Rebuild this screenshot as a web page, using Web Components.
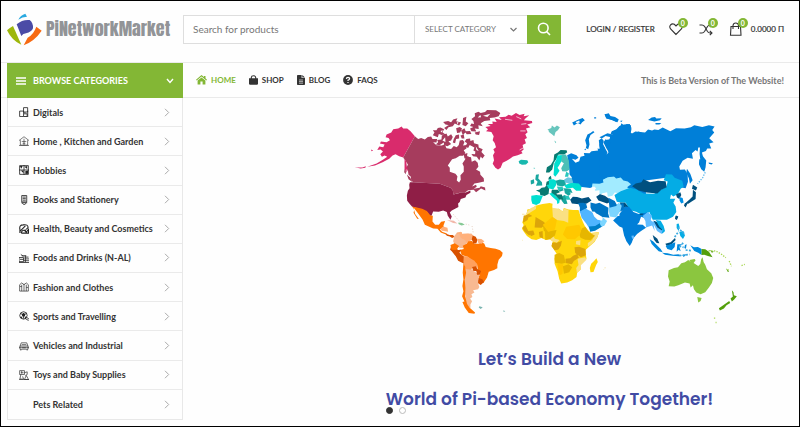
<!DOCTYPE html>
<html lang="en">
<head>
<meta charset="utf-8">
<meta name="viewport" content="width=device-width, initial-scale=1">
<title>PiNetworkMarket</title>
<style>
body{margin:0;background:#fff;font-family:Lato,"Liberation Sans",sans-serif;color:#333}
</style>
</head>
<body>
<market-page>
  <market-header slot="header"></market-header>
  <market-nav slot="nav"></market-nav>
  <category-menu slot="side">
    <category-item icon="digital">Digitals</category-item>
    <category-item icon="home">Home , Kitchen and Garden</category-item>
    <category-item icon="hobby">Hobbies</category-item>
    <category-item icon="book">Books and Stationery</category-item>
    <category-item icon="health">Health, Beauty and Cosmetics</category-item>
    <category-item icon="food">Foods and Drinks (N-AL)</category-item>
    <category-item icon="fashion">Fashion and Clothes</category-item>
    <category-item icon="sport">Sports and Travelling</category-item>
    <category-item icon="car">Vehicles and Industrial</category-item>
    <category-item icon="toy">Toys and Baby Supplies</category-item>
    <category-item>Pets Related</category-item>
  </category-menu>
  <hero-banner slot="hero">
    <world-map slot="picture"></world-map>
    <span slot="first">Let’s Build a New</span>
    <span slot="second">World of Pi-based Economy Together!</span>
  </hero-banner>
</market-page>
<script>
function define(name, html, setup){
  const t=document.createElement('template');
  t.innerHTML=html;
  customElements.define(name, class extends HTMLElement{
    constructor(){
      super();
      this.attachShadow({mode:'open'}).append(t.content.cloneNode(true));
    }
    connectedCallback(){ if(setup) setup(this,this.shadowRoot); }
  });
}

define('market-page', `
<style>
:host{display:flex;flex-direction:column;box-sizing:border-box;min-height:100vh;border:1px solid #000;background:#fefefe}
.main{flex:1;display:grid;grid-template-columns:176px 1fr;padding:0 0 6px 6px}
</style>
<slot name="header"></slot><slot name="nav"></slot>
<main class="main"><slot name="side"></slot><slot name="hero"></slot></main>`);

define('brand-logo', `
<style>
:host{display:block}
a{display:flex;align-items:center;gap:4px;text-decoration:none;color:#929497;font:400 18px Anton,Impact,"Roboto Condensed",sans-serif;line-height:32px}
svg{flex:none}
</style>
<a href="#"><svg width="35" height="33" viewBox="20 36 105 99" aria-hidden="true">
<path fill="#29a9e0" d="M54 56Q60 43 75 38L80 47Q66 47 54 56Z"/>
<path fill="#4b4ba6" d="M49 70Q66 55 88 57Q99 65 98 82Q94 93 77 97Q68 98 63 105Z"/>
<path fill="#9eb70b" d="M20 88Q28 80 38 75L63 131Q36 121 20 88Z"/>
<path fill="#f76a12" d="M70 133L82 110Q100 100 108 77L124 89Q103 120 70 133Z"/>
</svg><span>PiNetworkMarket</span></a>`);

define('product-search', `
<style>
:host{display:block}
form{display:flex;height:29px;margin:0}
input,select,button{font:inherit;border-radius:0;margin:0;box-sizing:border-box}
input{flex:1;min-width:0;border:1px solid #dedede;border-right:0;padding:0 0 0 9px;font-size:10px;color:#777;background:#fff;outline:0}
input::placeholder{color:#777;opacity:1}
.pick{position:relative;display:flex;width:113px}
select{appearance:none;width:100%;border:1px solid #dedede;border-right:0;background:#fff;color:#777;font-size:8px;padding:0 0 0 10px}
.pick svg{position:absolute;right:10px;top:11px;pointer-events:none}
button{width:34px;border:0;background:#83b735;padding:0;display:grid;place-items:center}
</style>
<form role="search"><input type="text" placeholder="Search for products" aria-label="Search for products">
<label class="pick"><select aria-label="Select category"><option>SELECT CATEGORY</option></select>
<svg width="7" height="7" viewBox="0 0 7 7" fill="none" stroke="#777" stroke-width="1.2"><path d="M.5 2L3.500 5L6.500 2"/></svg></label>
<button type="button" aria-label="Search"><svg width="14" height="14" viewBox="0 0 14 14" fill="none" stroke="#fff" stroke-width="1.600"><circle cx="6.300" cy="6" r="4.800"/><path d="M9.500 9.500L13 13"/></svg></button></form>`);

define('badge-link', `
<style>
:host{display:block}
a{position:relative;display:flex;align-items:center;color:#333;text-decoration:none}
b{position:absolute;left:9px;top:-4px;width:10px;height:10px;border-radius:50%;background:#83b735;color:#fff;font-size:7px;line-height:10px;text-align:center}
</style>
<a href="#"><slot></slot><b>0</b></a>`, (h,r)=>r.querySelector('a').setAttribute('aria-label',h.getAttribute('label')));

define('market-header', `
<style>
:host{display:flex;align-items:center;height:56px;padding:0 15px 5px 6px;border-bottom:1px solid #eaeaea}
brand-logo{width:176px}
product-search{flex:0 1 378px}
.login,.total{font-size:8px;color:#333;-webkit-text-stroke:.2px;text-decoration:none;white-space:nowrap}
.tools{margin-left:auto;display:flex;align-items:center}
.login{margin-right:14px}
badge-link{width:30px}
.total{margin-left:-8px}
svg{display:block}
</style>
<brand-logo></brand-logo><product-search></product-search>
<div class="tools"><a class="login" href="#">LOGIN / REGISTER</a>
<badge-link label="Wishlist"><svg width="14" height="14" viewBox="0 0 14 14" fill="none" stroke="#333" stroke-width="1.100"><path d="M7 12.500L1.600 7Q0 4.800 1.500 3Q3.200 1.200 5.300 2.300L7 4L8.700 2.300Q10.800 1.200 12.500 3Q14 4.800 12.400 7Z"/></svg></badge-link>
<badge-link label="Compare"><svg width="14" height="14" viewBox="0 0 14 14" fill="none" stroke="#333" stroke-width="1.100"><path d="M.5 3H3Q4.500 3 5.500 4.300L8.500 9.500Q9.500 11 11 11H13M.5 11H3Q4.500 11 5.500 9.500L8.500 4.500Q9.500 3 11 3H13M10.800 8.800L13 11L10.800 13.200M10.800 1L13 3L10.800 5"/></svg></badge-link>
<badge-link label="Cart"><svg width="14" height="14" viewBox="0 0 14 14" fill="none" stroke="#333" stroke-width="1.100"><path d="M2 4.500H11.500L12 13.300H1.500ZM4 7V3.500Q4.300 1 6.700 1Q9.200 1 9.500 3.500V7"/></svg></badge-link>
<a class="total" href="#">0.0000 Π</a></div>`);

define('market-nav', `
<style>
:host{display:flex;height:34px;padding:0 15px 0 6px;border-bottom:1px solid #eaeaea}
.browse{width:176px;box-sizing:border-box;border:0;background:#83b735;color:#fff;font:bold 9px Lato,sans-serif;display:flex;align-items:center;gap:7px;padding:0 9px;text-align:left;height:35px}
.browse span{flex:1;white-space:nowrap}
nav{display:flex;align-items:center;gap:13px;padding-left:13px}
nav a{display:flex;align-items:center;gap:4px;font-size:8px;font-weight:700;color:#333;text-decoration:none}
nav a.on{color:#83b735}
p{margin:0 0 0 auto;align-self:center;font-size:9px;font-weight:700;color:#777;white-space:nowrap}
</style>
<button class="browse" type="button"><svg width="10" height="8" viewBox="0 0 10 8" stroke="#fff" stroke-width="1.400"><path d="M0 1H10M0 4H10M0 7H10"/></svg><span>BROWSE CATEGORIES</span><svg width="8" height="6" viewBox="0 0 8 6" fill="none" stroke="#fff" stroke-width="1.400"><path d="M1 1L4 4.500L7 1"/></svg></button>
<nav>
<a class="on" href="#"><svg width="11" height="10" viewBox="0 0 11 10" fill="currentColor"><path d="M5.500 0L8 2.100V.9H9.500V3.300L11 4.700L10.300 5.400L5.500 1.500L.7 5.400L0 4.700Z"/><path d="M5.500 2.400L9.400 5.500V9.400H6.600V6.500H4.400V9.400H1.600V5.500Z"/></svg>HOME</a>
<a href="#"><svg width="9" height="10" viewBox="0 0 9 10"><path fill="currentColor" d="M0 3.200H9V8.500Q9 9.700 7.800 9.700H1.200Q0 9.700 0 8.500Z"/><path d="M2.300 4.500V2.500Q2.400.7 4.500.7Q6.600.7 6.700 2.500V4.500" fill="none" stroke="currentColor" stroke-width="1.100"/></svg>SHOP</a>
<a href="#"><svg width="8" height="10" viewBox="0 0 8 10"><path fill="currentColor" d="M.8 0H4.600V3H8V9.200Q8 10 7.200 10H.8Q0 10 0 9.200V.8Q0 0 .8 0ZM5.300 0L8 2.400H5.300Z"/><path d="M2 5H6M2 6.600H6M2 8.200H6" stroke="#fff" stroke-width=".6"/></svg>BLOG</a>
<a href="#"><svg width="10" height="10" viewBox="0 0 10 10"><circle cx="5" cy="5" r="4.900" fill="currentColor"/><path d="M3.300 3.800Q3.500 2.400 5 2.400Q6.700 2.500 6.600 3.700Q6.500 4.600 5 5.200V6.100M5 7V8.100" fill="none" stroke="#fff" stroke-width="1.200"/></svg>FAQS</a>
</nav><p>This is Beta Version of The Website!</p>`);

define('category-menu', `
<style>
:host{display:block}
nav{display:grid;grid-auto-rows:1fr;height:100%;box-sizing:border-box;border:1px solid #e8e8e8;border-top:0}
</style><nav aria-label="Categories"><slot></slot></nav>`);

const ICONS={
digital:'<path d="M.7 4.500H5V10.500H.7ZM5 .7H9.500V5.500H5ZM5.500 7.500H9V10.500H5.500M6.500 5.500V7M9.600 4V11H4"/>',
home:'<path opacity=".7" d="M0 5L5.500.8L11 5M1.500 4.500V10H9.500V4.500M0 10.500H11M3 6H8M4 8H7M5.500 3V10"/>',
hobby:'<path d="M.7.7H10.300V10.300H.7ZM5.500 0V11M0 5.500H11"/><path fill="#222" stroke="none" d="M1 1H4L2.500 4ZM6 2L9 1V4.500ZM2 6H5V9ZM7 6.500L10 6V9.500L7 10Z"/>',
book:'<path d="M3 .6H8.500V7.600H3ZM4 2.300H7.500M4 4H7.500M4 5.700H7.500M2.500 8.500H9M3.500 9L5.700 10.700L8 9"/>',
health:'<path stroke-width="1.200" d="M1 10V6Q0 1 4.500 1Q10 0 10 4L8 6M1 8L4 5L7 2M2.500 10Q3 6.500 6 7L8 9L10.500 6V10H2.500M7 8V6"/>',
food:'<path d="M0 5H5V9.500H0ZM3 3H8M2 1.500L5 4M6 4.500H10.500M6 6.500H11M5.500 8.500H11M0 10.500H11M1 7H5M7 3V10"/>',
fashion:'<path opacity=".8" d="M.7 3L3 1L5.500 3L8 1L10.300 3V10H.7ZM3 3V10M5.500 2V10M8 3V10M1 5H3M8 6H10"/>',
sport:'<path d="M5 .8Q9.200 1 9 5Q8.500 9 5 9Q.7 8.700.8 5Q1 1 5 .8ZM6.500 8L10.500 10.500M8.500 7L11 9M3.500 3.500L1.500 2.500M6.500 3.500L8.500 2.500M5 5.500V8.500"/><path fill="#222" stroke="none" d="M3 3.500L5 2L7 3.500L6.300 6H3.700ZM1 7L3 6L4 8.500ZM6 8.500L7 6L9 6.500Z"/>',
car:'<path opacity=".8" d="M1 6L2.500 2H8.500L10 6V9H1ZM1 5.500H10M3 4H8M0 7H11M2 9V10.500M9 9V10.500M3.500 7.500H7.500"/>',
toy:'<path opacity=".8" d="M.7.7H6V5H.7ZM3 1V4M6 3L9 2V5L7 6M2 5L1 10H5L4 7M6 10.500L8 6L10.500 10.500ZM0 10.500H11M2 3H5"/>'
};
define('category-item', `
<style>
:host{display:block;border-bottom:1px solid #eaeaea;min-height:28px}
:host(:last-child){border-bottom:0}
a{height:100%;display:flex;align-items:center;color:#333;text-decoration:none;font-size:9px;font-weight:700;padding:0 12px 0 11px;white-space:nowrap}
.icon{width:14px;display:flex}
.label{flex:1}
</style>
<a href="#"><span class="icon"></span><span class="label"><slot></slot></span><svg width="6" height="9" viewBox="0 0 6 9" fill="none" stroke="#aaa"><path d="M1 .8L4.700 4.500L1 8.200"/></svg></a>`,
(h,r)=>{const i=ICONS[h.getAttribute('icon')];if(i)r.querySelector('.icon').innerHTML='<svg width="10" height="10" viewBox="0 0 11 11" fill="none" stroke="#222" stroke-width=".9">'+i+'</svg>';});

define('world-map', `
<style>:host{display:block}svg{display:block;width:100%;height:auto}</style>
<svg viewBox="350 98 400 241" role="img" aria-label="World map">
<g transform="translate(350 95) scale(.3333)">
<path fill="#d92b6c" d="M195 124L160 188L148 184L137 178L128 182L118 192L98 202L75 212L52 216L80 206L100 194L112 186L104 182L96 186L91 178L99 170L92 164L82 165L88 155L100 157L104 149L90 146L93 140L110 142L120 136L116 129L107 127L110 119L124 113L130 103L145 101L155 95L160 101L172 101L182 109ZM14 217L24 218L37 218L48 214L46 219L32 221ZM64 164L70 167L64 169ZM112 185L120 181L118 188Z"/>
<path fill="#a63c5d" d="M195 124L205 132L214 129L225 134L234 126L244 125L248 132L262 132L260 143L250 142L260 151L276 152L285 148L290 160L304 162L312 153L321 157L327 150L330 137L339 135L344 141L340 152L351 150L350 161L342 166L347 174L340 183L330 183L318 190L307 193L294 212L300 219L300 231L317 237L323 244L321 257L328 263L333 255L332 241L342 231L342 215L338 206L346 194L350 184L364 188L366 201L376 196L384 204L386 216L379 224L391 231L392 240L402 250L403 260L387 264L374 266L367 275L379 270L381 276L372 282L390 279L393 274L406 278L407 287L394 281L379 292L372 285L355 286L345 294L330 294L311 299L309 286L302 279L270 267L190 262L184 257L183 246L176 240L174 226L169 220L174 209L164 193L160 188Z"/>
<path fill="#a63c5d" d="M272 98L283 103L278 112L286 118L276 120L267 117L264 127L249 121L254 113L249 106L260 106L264 99ZM280 81L295 78L305 83L299 91L287 89ZM310 74L323 70L319 79L334 83L328 92L315 86L309 94L296 97L290 105L283 99L300 88ZM276 122L290 116L294 125L304 118L309 126L304 137L296 139L304 147L293 154L283 151L282 143L269 151L258 149L265 142L262 135L275 134ZM340 69L350 65L348 80L356 85L348 94L338 90ZM319 100L330 96L337 101L331 113L322 114ZM334 107L344 100L348 109L361 108L365 117L351 118L347 113L339 120ZM365 72L376 64L375 55L386 50L393 54L406 51L412 45L439 46L452 54L447 64L434 68L420 69L422 76L404 78L393 85L399 94L386 91L387 102L375 101L380 110L365 109L361 101L371 96L361 93L365 86L373 87L371 78ZM375 113L391 109L388 120L378 119ZM318 121L328 119L328 131L319 132L316 145L309 143L312 132ZM332 122L342 119L344 131L336 131ZM350 132L361 131L362 138L371 135L373 145L386 149L387 158L399 163L395 171L405 182L398 191L393 185L389 197L381 186L370 184L365 177L376 178L377 170L371 167L374 158L360 150L355 159L347 155L352 145L345 140ZM342 178L353 174L352 184L364 188L356 195L344 190Z"/>
<path fill="#fefefe" d="M272 108L279 106L276 113ZM278 137L286 127L287 141ZM321 83L326 81L324 89ZM384 68L392 60L394 67ZM400 62L422 56L413 66ZM370 120L373 132L366 128ZM378 154L387 168L380 165Z"/>
<path fill="#8f1e46" d="M190 262L270 267L302 279L309 286L311 299L332 294L348 293L362 287L362 294L350 301L347 308L333 313L330 322L325 326L326 337L306 347L300 353L306 365L302 375L294 363L291 352L280 347L267 351L250 350L245 363L239 363L231 351L218 350L206 341L187 336L179 327L172 318L171 302L174 288L179 280L178 270L180 262Z"/>
<path fill="#d92b6c" d="M160 188L169 199L171 216L178 238L173 227L164 215L164 195ZM164 207L169 216L171 234L164 222Z"/>
<path fill="#a63c5d" d="M171 239L181 248L188 262L176 253ZM164 222L168 228L168 238L163 232Z"/>
<path fill="#d92b6c" d="M407 96L423 93L414 87L429 87L428 80L441 81L435 71L456 75L448 67L468 65L477 59L486 62L499 54L510 60L525 56L522 64L539 61L528 70L523 76L547 78L548 84L533 89L542 97L529 101L534 112L527 118L532 129L525 133L529 145L519 150L522 164L515 170L519 175L504 181L490 185L483 190L471 198L459 204L453 219L445 224L437 219L429 207L433 196L430 181L435 172L431 163L439 157L435 144L429 136L432 124L425 111L409 109L415 103Z"/>
<path fill="none" stroke="#fefefe" stroke-width="2" d="M466 73L488 76M500 65L515 72M515 88L530 86M512 108L528 108M510 165L525 157"/>
</g>
<g transform="translate(350 200) scale(.3333)">
<path fill="#ff7500" d="M187 20L201 23L217 27L231 34L242 47L249 48L248 65L256 75L267 75L274 66L286 64L281 77L282 84L270 89L277 96L291 101L290 105L273 98L263 87L250 86L225 75L218 59L206 43L198 32L191 23L196 43L207 58L202 57L191 39L193 31Z"/>
<path fill="#ffb07b" d="M272 87L280 80L293 84L295 96L283 94L276 93Z"/><path fill="#d85100" d="M287 101L299 106L309 106L315 111L307 115L300 110L291 108Z"/>
<path fill="#f8b991" d="M314 109L321 99L333 96L337 102L352 102L365 101L374 112L367 118L352 124L350 135L343 137L339 145L330 144L314 133L310 125Z"/>
<path fill="#ffb07b" d="M321 99L336 97L337 103L355 101L368 106L371 119L361 123L351 131L345 121L337 119L327 113Z"/>
<path fill="#f8b991" d="M313 109L328 101L333 114L348 123L347 136L339 145L328 143L313 134Z"/>
<path fill="#ff7500" d="M339 138L351 132L356 125L366 124L373 132L387 132L396 127L404 132L408 142L423 145L438 147L451 152L459 159L457 169L447 180L443 195L443 206L433 211L417 216L412 234L401 250L394 246L386 235L391 221L384 208L382 194L370 185L353 171L336 166L330 151L342 148Z"/>
<path fill="#d85100" d="M303 143L315 142L325 151L334 150L329 159L336 166L344 171L343 192L325 183L318 170L306 155L301 150ZM369 107L378 111L383 121L380 131L371 132L366 119ZM386 235L398 239L403 247L393 256L384 250Z"/>
<path fill="#ff7500" d="M302 136L315 131L328 139L320 151L305 150Z"/>
<path fill="#ffb07b" d="M382 117L395 118L404 125L396 132L386 131Z"/><path fill="#ffa05d" d="M342 170L352 170L365 178L374 183L382 194L382 204L367 204L365 211L349 211L345 204L341 187Z"/>
<path fill="#f8b991" d="M347 208L367 210L390 226L386 235L385 251L389 262L385 269L370 272L374 279L365 284L368 292L361 297L367 305L362 315L362 325L349 322L345 310L347 290L342 265L345 239Z"/>
<path fill="#d85100" d="M367 202L378 200L383 208L394 214L390 225L382 225L380 215L370 213Z"/>
<path fill="#ff7500" d="M341 191L346 200L349 219L345 240L347 265L346 290L352 313L359 324L376 339L374 343L357 340L345 324L338 307L344 306L337 290L341 275L338 259L341 239L339 219Z"/>
<path fill="#f2b8aa" d="M292 61L312 63L323 71L310 70L298 64Z"/><path fill="#87c996" d="M326 68L337 70L345 75L335 77L326 73Z"/><path fill="#7cb5b1" d="M389 320L399 323L393 328L387 324ZM461 332L467 335L462 337Z"/><path fill="none" stroke="#e5d0c2" stroke-width="3" stroke-dasharray="3 5" d="M311 44L330 66M348 73L359 76M367 79L371 102"/>
</g>
<g transform="translate(500 190) scale(.3333)">
<path fill="#ffd60a" d="M83 59L99 56L107 48L129 43L150 40L159 42L158 53L166 59L178 57L189 65L193 55L207 59L221 61L237 61L243 79L250 96L256 109L265 121L275 130L299 127L294 142L285 157L268 172L258 181L259 195L261 207L248 218L242 227L244 239L233 249L231 262L218 272L203 279L185 282L179 268L174 245L165 222L165 206L171 192L164 181L156 170L160 154L149 148L139 151L125 145L110 151L96 149L82 139L71 124L67 117L72 106L68 98L72 85L82 74Z"/>
<path fill="#dca50a" d="M72 78L88 73L98 79L86 83L84 91L70 99ZM108 82L132 96L139 103L126 114L105 113ZM68 114L77 106L86 124L97 126L89 137L75 126ZM158 159L177 158L187 153L184 168L177 179L165 182L156 169ZM198 207L212 206L221 198L233 193L238 204L223 214L217 224L198 220ZM225 173L239 171L258 178L259 197L244 203L227 190Z"/>
<path fill="#fae083" d="M158 54L178 57L189 65L193 56L207 61L206 99L193 94L172 91L160 82ZM94 55L110 48L109 58L92 68L76 78L82 66ZM272 132L299 127L294 143L281 160L265 171L265 160L278 151L282 143L271 137ZM230 154L243 152L242 167L229 164ZM234 207L257 203L261 210L244 227L244 239L232 249L230 235L237 226ZM142 139L158 134L166 147L180 151L172 159L157 155Z"/>
<path fill="#e6b600" d="M129 105L139 103L146 129L133 124ZM247 116L257 111L269 128L287 138L273 151L257 150L243 144L239 133ZM165 195L179 190L193 197L198 219L187 222L167 220L165 209ZM190 230L207 224L218 233L209 248L193 252ZM136 122L154 123L171 121L166 137L151 149L137 151Z"/>
<path fill="#ffc800" d="M200 111L239 105L246 118L241 136L226 149L203 148L190 134ZM173 223L191 224L189 253L180 257ZM130 105L158 82L172 91L166 119L146 127Z"/>
<path fill="#dca50a" d="M86 124L101 122L105 134L94 140ZM118 127L129 124L130 146L120 142ZM177 157L184 158L176 179L166 182L164 174L172 174Z"/>
<path fill="#ffd60a" d="M291 206L295 217L290 226L282 247L273 248L271 235L275 222L283 215Z"/>
<path fill="#f5e5ac" d="M67 72H75V75H67ZM67 150H69V153H67ZM314 234L319 232L317 237ZM312 239L315 239L312 242Z"/>
</g>
<g transform="translate(510 100) scale(.3333)">
<path fill="#007fd8" d="M173 166L185 160L201 166L207 174L198 180L187 177L198 189L209 184L213 171L225 168L223 159L240 160L246 154L266 152L264 146L275 148L270 139L268 121L277 115L283 123L280 135L294 157L289 170L298 160L294 142L285 130L287 120L302 118L304 112L318 107L303 103L307 94L321 88L330 78L344 74L361 72L366 84L361 96L370 102L388 95L400 100L410 285L180 257L187 232L180 224L179 208Z"/>
<path fill="#007fd8" d="M231 136L227 121L234 104L243 99L251 93L255 97L243 105L238 118L240 134L236 148L229 144ZM188 68L202 61L219 54L226 61L218 67L213 74L205 69L193 77ZM286 43L298 40L303 48L317 51L328 59L324 67L309 61L291 56ZM331 63L339 62L337 66ZM254 52H260V56H254ZM224 149L229 146L229 151Z"/>
<path fill="#68c5bd" d="M114 89L125 84L127 77L135 83L142 77L151 82L145 91L138 96L134 109L127 103L119 97ZM134 122L140 126L138 130Z"/>
<path fill="#18b8ae" d="M27 184L34 180L53 181L56 187L49 194L37 195L29 191ZM73 203L77 206H72Z"/>
<path fill="#087a72" d="M109 218L112 202L124 195L132 181L134 164L145 158L153 150L171 151L173 157L164 164L147 164L140 178L133 188L128 209L119 218ZM89 270L96 264L106 262L112 254L119 264L117 283L105 289L92 286L91 278L79 271ZM118 232L124 228L126 239L116 239Z"/>
<path fill="#00dfd0" d="M134 191L140 180L143 167L157 165L158 180L149 196L144 204L150 213L143 223L137 231L132 225L133 211ZM65 288L80 286L100 288L96 297L91 310L80 316L68 312L65 301ZM116 252L118 239L132 238L142 244L139 257L131 269L116 265L112 256ZM183 249L208 251L216 261L214 273L200 273L190 264L171 266L164 257ZM119 281L134 278L138 289L151 299L149 310L143 313L142 303L128 291Z"/>
<path fill="#4bc0b7" d="M157 164L169 164L178 182L180 209L171 215L158 214L155 205L163 190L155 185Z"/>
<path fill="#18a69f" d="M79 225L88 223L86 236L97 247L98 257L79 258L84 246L77 239ZM63 242L73 238L74 250L64 254ZM138 243L151 239L167 241L169 255L159 260L143 257ZM163 265L183 267L189 279L177 288L166 280ZM157 290L165 286L178 293L170 299L174 312L164 313L156 302ZM144 263L155 262L163 271L150 276Z"/>
<path fill="#087a72" d="M127 270L145 270L151 277L140 282L151 291L157 299L149 299L136 286L125 278ZM111 246L118 243L118 254L109 256ZM143 284L157 284L161 300L153 299Z"/>
<path fill="#28c7bd" d="M170 216L178 220L176 231L166 231ZM142 260L158 261L163 267L147 272ZM166 288L177 288L183 300L171 300Z"/>
<path fill="#68c5e1" d="M164 239L175 232L187 235L191 249L179 251L166 248Z"/>
<path fill="#a2ebff" d="M249 251L270 252L282 248L280 239L294 231L313 229L320 236L334 233L342 242L355 245L365 253L353 262L360 267L352 276L331 281L316 278L309 288L295 291L293 277L279 280L270 287L270 271L258 273L247 263Z"/>
<path fill="#fefefe" d="M180 278L197 280L205 289L223 291L217 281L209 280L219 275L228 287L240 286L228 276L243 264L254 260L260 265L252 275L260 286L263 303L253 299L247 287L233 290L222 296L205 292L190 289Z"/>
<path fill="#00507f" d="M182 300L190 291L203 292L217 296L237 292L246 302L232 311L216 314L187 311ZM260 291L269 285L289 292L300 307L293 311L267 302Z"/>
<path fill="#fefefe" d="M113 91H117V94H113ZM198 66L209 62L211 68L201 70Z"/>
</g>
<g transform="translate(600 100) scale(.3333)">
<path fill="#007fd8" d="M0 112L7 116L18 108L32 111L29 122L37 134L29 126L18 118L12 128L21 146L28 157L21 164L17 145L6 123L0 133V244L25 232L60 228L110 246L200 234L238 241L247 263L259 265L266 246L265 224L257 209L242 210L240 200L250 183L265 174L281 177L278 160L289 150L295 155L297 143L302 143L301 162L303 178L302 197L316 213L319 202L321 182L311 169L308 158L320 153L324 146L336 146L330 131L343 127L330 115L345 98L339 90L346 80L329 76L309 81L285 76L275 82L256 86L230 85L213 94L190 83L177 90L165 89L158 92L146 89L137 98L108 95L93 104L96 89L94 76L82 72L76 78L66 70L61 84L50 90L36 97L45 105L24 100Z"/>
<path fill="#007fd8" d="M15 43L28 43L31 51L51 58L52 67L35 59L20 55ZM146 60L157 53L167 51L171 56L187 55L182 61L165 65ZM168 69L186 69L180 74H169ZM328 188L341 190L337 194L329 192ZM300 178L312 179L317 199L315 216L306 208L299 193ZM263 207L273 222L280 241L272 252L269 236L261 219Z"/>
<path fill="#04ace5" d="M45 286L64 274L92 264L110 268L133 281L164 282L201 260L205 245L193 241L200 223L218 224L226 234L249 243L253 261L244 267L236 283L222 290L215 284L212 297L228 297L222 309L229 320L231 337L221 351L203 360H160L150 337L133 348L110 336L90 331L79 309L64 308L52 306Z"/>
<path fill="#00507f" d="M98 259L109 251L126 247L132 238L152 247L176 243L199 244L202 262L186 270L174 281L142 278L118 272ZM0 283L16 288L38 304L24 310L0 298ZM61 308L77 309L87 322L78 325L67 322ZM230 284L243 277L246 286L240 298L233 293ZM281 255L294 263L290 272L278 267ZM281 270L290 277L289 298L276 306L267 312L257 311L270 300L280 290ZM257 310L264 313L259 323L254 317ZM230 347L237 350L233 360L227 358Z"/>
<path fill="#0090e5" d="M240 292L250 295L253 308L246 311L241 303Z"/>
<path fill="none" stroke="#60b9eb" stroke-width="4" stroke-dasharray="4 4" d="M318 217L310 234L295 252"/>
</g>
<g transform="translate(500 190) scale(.3333)">
<path fill="#0075c5" d="M327 24L346 34L352 45L372 40L375 60L350 70L330 55Z"/>
<path fill="#007fd8" d="M341 92L355 79L372 78L386 83L402 95L415 104L430 105L440 114L425 124L413 133L402 146L397 159L391 169L381 155L374 137L369 114L360 110Z"/>
<path fill="#0075c5" d="M273 38L289 42L300 39L327 54L326 71L330 84L309 82L294 73L279 67L273 53ZM236 40L251 39L260 42L263 53L259 58L241 69L241 53Z"/>
<path fill="#50b5ff" d="M241 65L258 56L278 67L288 81L300 91L317 97L314 107L295 116L274 123L260 101L246 83Z"/><path fill="#007fc8" d="M268 110L287 109L303 99L308 110L287 123L272 126Z"/><path fill="#7cd5ff" d="M304 91L309 82L323 94L315 107L305 110L301 101ZM327 55L350 49L358 39L367 48L363 63L350 83L331 80Z"/><path fill="#fefefe" d="M278 65L286 66L298 82L310 84L308 92L294 90L284 80Z"/>
</g>
<g transform="translate(620 200) scale(.3333)">
<path fill="#007fd8" d="M0 43L17 20L29 22L42 37L58 43L83 38L84 48L73 54L65 51L59 68L42 84L37 104L28 110L19 96L10 77L8 56L0 53Z"/>
<path fill="#60bcff" d="M70 49L85 37L98 48L94 61L102 69L106 94L98 77L80 83L78 64ZM98 65L109 65L120 78L131 91L136 96L126 102L113 94L104 76ZM36 108L43 107L44 116L38 117Z"/><path fill="#00507f" d="M102 62L115 68L124 81L131 83L128 92L114 83ZM100 106L114 117L120 131L112 130L104 120ZM138 132L154 128L167 115L169 121L157 134L142 139ZM63 41L73 42L69 46L61 46ZM169 48L175 51L172 61L168 56Z"/><path fill="#04ace5" d="M109 61L124 63L133 79L137 94L127 103L130 91L120 81ZM172 73L178 71L181 82L178 94L172 85ZM180 97L192 94L197 107L191 118L183 109Z"/>
<path fill="#0089dd" d="M91 119L101 125L112 136L124 148L130 158L118 155L106 143L97 133ZM139 139L155 133L168 128L166 142L157 152L144 148ZM128 159L145 161L162 165L177 164L188 168L178 170L159 168L137 165ZM174 134L190 134L180 140L184 155L178 150L172 156ZM213 137L224 143L236 142L247 148L247 166L237 159L225 154ZM189 166L204 163L193 172ZM197 136L202 134L200 147L195 145Z"/>
<path fill="none" stroke="#3aa9e0" stroke-width="5" stroke-dasharray="6 4" d="M176 83L184 92L195 102M166 112L178 95M180 139L193 143M199 151L217 153M188 129L192 134M180 168L211 164"/>
<path fill="#539f0b" d="M247 148L258 149L269 156L280 173L266 169L255 165L247 166ZM272 151L284 156L278 159ZM338 272L343 278L344 287L353 290L345 300L338 306L334 297L341 291ZM330 304L333 310L322 317L314 327L302 333L299 326L311 318ZM320 206L330 215L326 217Z"/>
<path fill="none" stroke="#a9d753" stroke-width="4" stroke-dasharray="4 4" d="M268 153L290 154L307 164L320 174M330 184L337 200M325 209L330 214M367 198L377 194M284 356H288M289 369H292"/>
<path fill="#8bc63f" d="M148 212L164 205L176 203L186 191L197 188L207 181L214 187L210 181L226 178L229 182L223 190L237 199L243 193L246 178L250 173L253 187L258 195L263 209L276 221L282 235L278 250L269 264L258 278L244 284L231 279L224 269L221 257L214 264L211 252L197 249L177 257L165 261L148 260L151 246L146 231ZM234 292L247 295L244 304L237 309Z"/>
</g>
</svg>`);

define('hero-banner', `
<style>
:host{display:block;position:relative;padding-left:19%;text-align:center}
.art{width:80%;margin:0 auto;max-width:600px}
h2{margin:0;font:600 17px/40px Poppins,Inter,"Open Sans",sans-serif;color:#414ba4;white-space:nowrap}
.dots{position:absolute;left:33%;bottom:6px;display:flex;gap:6px}
button{width:7px;height:7px;box-sizing:border-box;border:1px solid #bbb;border-radius:50%;padding:0;background:#fff}
button.on{background:#333;border-color:#333}
</style>
<div class="art"><slot name="picture"></slot></div>
<h2><slot name="first"></slot></h2><h2><slot name="second"></slot></h2>
<div class="dots"><button class="on" type="button" aria-label="Slide 1"></button><button type="button" aria-label="Slide 2"></button></div>`);
</script>
</body>
</html>
